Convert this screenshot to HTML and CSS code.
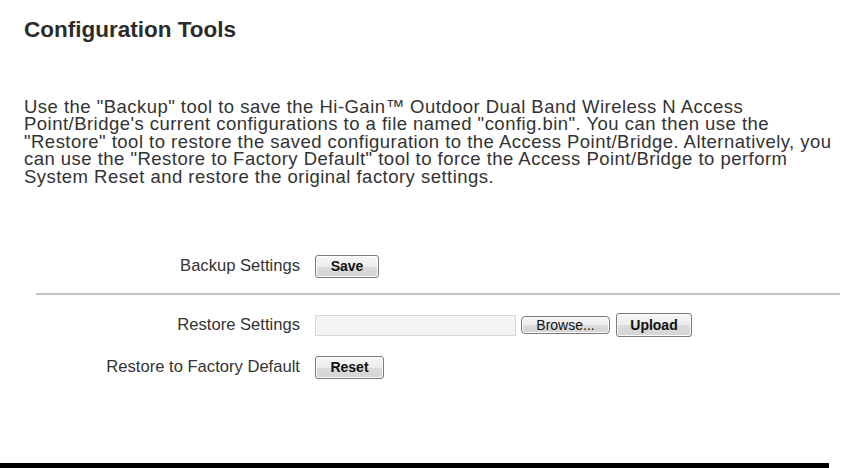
FILE: index.html
```html
<!DOCTYPE html>
<html>
<head>
<meta charset="utf-8">
<link rel="stylesheet" href="styles.css">
</head>
<body>
<div class="page">
  <h1 class="title">Configuration Tools</h1>
  <p class="intro">Use the "Backup" tool to save the Hi-Gain™ Outdoor Dual Band Wireless N Access<br>Point/Bridge's current configurations to a file named "config.bin". You can then use the<br>"Restore" tool to restore the saved configuration to the Access Point/Bridge. Alternatively, you<br>can use the "Restore to Factory Default" tool to force the Access Point/Bridge to perform<br>System Reset and restore the original factory settings.</p>
  <div class="row row-backup">
    <div class="label">Backup Settings</div>
    <div class="controls"><button class="btn btn-save">Save</button></div>
  </div>
  <div class="rule"></div>
  <div class="row row-restore">
    <div class="label">Restore Settings</div>
    <div class="controls">
      <span class="file-field"></span>
      <button class="btn btn-browse">Browse...</button>
      <button class="btn btn-upload">Upload</button>
    </div>
  </div>
  <div class="row row-reset">
    <div class="label">Restore to Factory Default</div>
    <div class="controls"><button class="btn btn-reset">Reset</button></div>
  </div>
</div>
<div class="bottom-bar"></div>
</body>
</html>
```

FILE: styles.css
```css
html, body {
  margin: 0;
  padding: 0;
  background: #fff;
}
body {
  font-family: "Liberation Sans", Arial, sans-serif;
  color: #333;
  width: 854px;
  height: 468px;
  position: relative;
  overflow: hidden;
}
.page {
  padding: 17px 0 0 24px;
  width: 816px;
}
.title {
  margin: 0;
  font-size: 22.5px;
  line-height: 26px;
  font-weight: bold;
  color: #2b2b2b;
}
.intro {
  margin: 55px 0 0 0;
  font-size: 18.5px;
  letter-spacing: 0.47px;
  line-height: 17.4px;
  color: #333;
  width: 830px;
  white-space: nowrap;
}
.row {
  display: grid;
  grid-template-columns: 276px auto;
  column-gap: 15px;
  align-items: center;
}
.label {
  text-align: right;
  font-size: 16.6px;
  color: #333;
}
.controls {
  display: flex;
  align-items: center;
  gap: 6px;
}
.row-backup {
  margin-top: 69px;
  height: 24px;
}
.rule {
  margin: 15px 0 0 12px;
  height: 2px;
  background: #c4c4c4;
  width: 804px;
}
.row-restore {
  margin-top: 18px;
  height: 24px;
}
.row-reset {
  margin-top: 18px;
  height: 24px;
}
.btn {
  font-family: "Liberation Sans", Arial, sans-serif;
  font-size: 14px;
  font-weight: bold;
  color: #111;
  height: 23px;
  padding: 0 12px;
  border: 1px solid #7a7a7a;
  border-radius: 3px;
  background: linear-gradient(#f6f6f6 0%, #ececec 50%, #dcdcdc 51%, #d4d4d4 100%);
  box-shadow: inset 0 0 0 1px #fcfcfc;
  line-height: 20px;
}
.btn-save { width: 64px; }
.btn-reset { width: 69px; }
.btn-upload { width: 76px; height: 24px; }
.btn-browse {
  font-weight: normal;
  width: 89px;
  height: 18px;
  line-height: 15px;
  border-radius: 4px;
  padding: 0;
  margin-left: 0;
}
.file-field {
  display: block;
  width: 199px;
  height: 19px;
  border: 1px solid #d8d8d8;
  background: #f4f4f4;
  margin-right: -1px;
}
.bottom-bar {
  position: absolute;
  left: 0;
  top: 463px;
  width: 829px;
  height: 5px;
  background: #000;
}
```
